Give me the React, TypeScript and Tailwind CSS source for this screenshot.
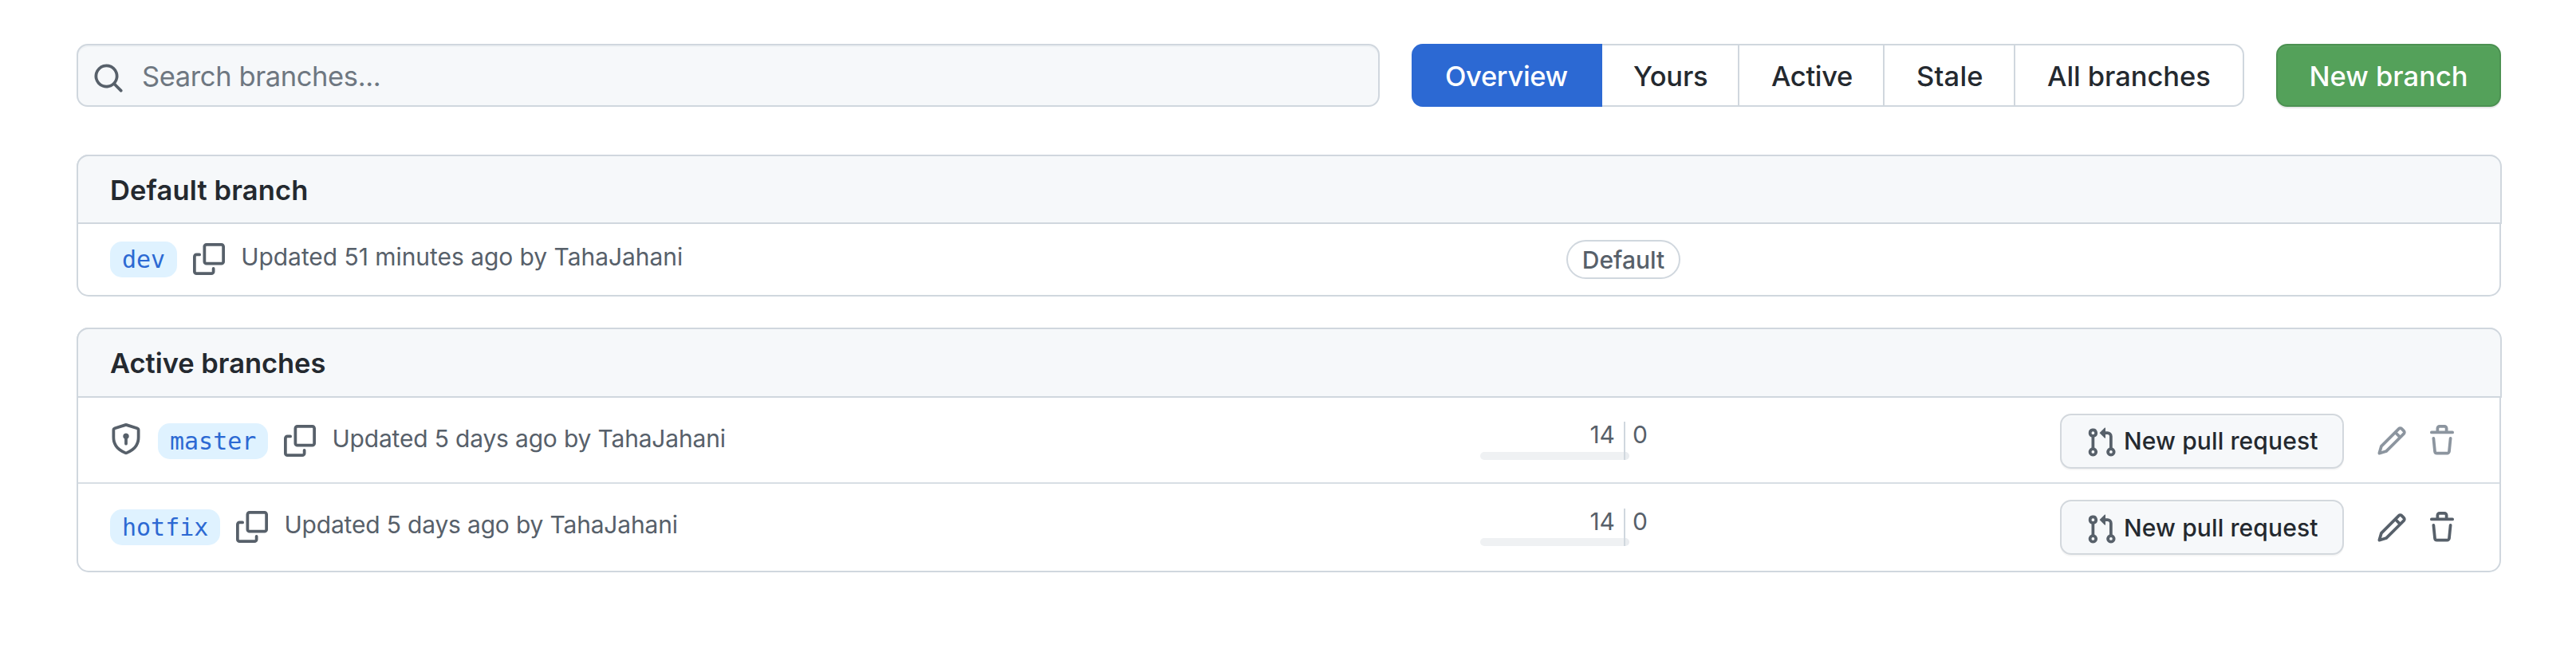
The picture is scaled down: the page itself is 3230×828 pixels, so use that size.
import React from "react";

const paths = {
  search:
    "M11.5 7a4.499 4.499 0 11-8.998 0A4.499 4.499 0 0111.5 7zm-.82 4.74a6 6 0 111.06-1.06l3.04 3.04a.75.75 0 11-1.06 1.06l-3.04-3.04z",
  copy:
    "M0 6.75C0 5.784.784 5 1.75 5h1.5a.75.75 0 010 1.5h-1.5a.25.25 0 00-.25.25v7.5c0 .138.112.25.25.25h7.5a.25.25 0 00.25-.25v-1.5a.75.75 0 011.5 0v1.5A1.75 1.75 0 019.25 16h-7.5A1.75 1.75 0 010 14.25v-7.5zM5 1.75C5 .784 5.784 0 6.75 0h7.5C15.216 0 16 .784 16 1.75v7.5A1.75 1.75 0 0114.25 11h-7.5A1.75 1.75 0 015 9.25v-7.5zm1.75-.25a.25.25 0 00-.25.25v7.5c0 .138.112.25.25.25h7.5a.25.25 0 00.25-.25v-7.5a.25.25 0 00-.25-.25h-7.5z",
  shield:
    "M8.533.133a1.75 1.75 0 00-1.066 0l-5.25 1.68A1.75 1.75 0 001 3.48V7c0 1.566.32 3.182 1.303 4.682.983 1.498 2.585 2.813 5.032 3.855a1.7 1.7 0 001.33 0c2.447-1.042 4.049-2.357 5.032-3.855C14.68 10.182 15 8.566 15 7V3.48a1.75 1.75 0 00-1.217-1.667L8.533.133zm-.61 1.429a.25.25 0 01.153 0l5.25 1.68a.25.25 0 01.174.238V7c0 1.358-.275 2.666-1.057 3.86-.784 1.194-2.121 2.34-4.366 3.297a.2.2 0 01-.154 0c-2.245-.956-3.582-2.104-4.366-3.298C2.775 9.666 2.5 8.36 2.5 7V3.48a.25.25 0 01.174-.237l5.25-1.68zM9.5 6.5a1.5 1.5 0 01-.75 1.3v2.45a.75.75 0 01-1.5 0V7.8A1.5 1.5 0 119.5 6.5z",
  pullRequest:
    "M7.177 3.073L9.573.677A.25.25 0 0110 .854v4.792a.25.25 0 01-.427.177L7.177 3.427a.25.25 0 010-.354zM3.75 2.5a.75.75 0 100 1.5.75.75 0 000-1.5zm-2.25.75a2.25 2.25 0 113 2.122v5.256a2.251 2.251 0 11-1.5 0V5.372A2.25 2.25 0 011.5 3.25zM11 2.5h-1V4h1a1 1 0 011 1v5.628a2.251 2.251 0 101.5 0V5A2.5 2.5 0 0011 2.5zm1 10.25a.75.75 0 111.5 0 .75.75 0 01-1.5 0zM3.75 12a.75.75 0 100 1.5.75.75 0 000-1.5z",
  pencil:
    "M11.013 1.427a1.75 1.75 0 012.474 0l1.086 1.086a1.75 1.75 0 010 2.474l-8.61 8.61c-.21.21-.47.364-.756.445l-3.251.93a.75.75 0 01-.927-.928l.929-3.25a1.75 1.75 0 01.445-.758l8.61-8.61zm1.414 1.06a.25.25 0 00-.354 0L10.811 3.75l1.439 1.44 1.263-1.263a.25.25 0 000-.354l-1.086-1.086zM11.189 6.25L9.75 4.81l-6.286 6.287a.25.25 0 00-.064.108l-.558 1.953 1.953-.558a.249.249 0 00.108-.064l6.286-6.286z",
  trash:
    "M6.5 1.75a.25.25 0 01.25-.25h2.5a.25.25 0 01.25.25V3h-3V1.75zm4.5 0V3h2.25a.75.75 0 010 1.5H2.75a.75.75 0 010-1.5H5V1.75C5 .784 5.784 0 6.75 0h2.5C10.216 0 11 .784 11 1.75zM4.496 6.675a.75.75 0 10-1.492.15l.66 6.6A1.75 1.75 0 005.405 15h5.19c.9 0 1.652-.681 1.741-1.576l.66-6.6a.75.75 0 00-1.492-.149l-.66 6.6a.25.25 0 01-.249.225h-5.19a.25.25 0 01-.249-.225l-.66-6.6z",
};

function Icon({ name, className = "" }: { name: keyof typeof paths; className?: string }) {
  return (
    <svg viewBox="0 0 16 16" fill="currentColor" fillRule="evenodd" className={`size-10 shrink-0 ${className}`}>
      <path d={paths[name]} />
    </svg>
  );
}

const tabs = [
  { label: "Overview", style: "w-[239px] rounded-l-[14px] bg-[#2c69d3] pl-[42px] text-white tracking-[-0.34px]" },
  { label: "Yours", style: "w-[172px] border-y-2 border-r-2 border-[#d0d7de] pl-[39px] tracking-[-0.24px]" },
  { label: "Active", style: "w-[182px] border-y-2 border-r-2 border-[#d0d7de] pl-10 tracking-[-0.34px]" },
  { label: "Stale", style: "w-[164px] border-y-2 border-r-2 border-[#d0d7de] pl-10 tracking-[0.2px]" },
  { label: "All branches", style: "w-[287px] rounded-r-[14px] border-y-2 border-r-2 border-[#d0d7de] pl-10 tracking-[-0.05px]" },
];

function Toolbar() {
  return (
    <div className="flex h-[79px] text-[34.5px] font-medium">
      <div className="flex w-[1634px] items-center rounded-[14px] border-2 border-[#d0d7de] bg-[#f6f8fa] pl-[18px] shadow-[inset_0_2px_0_rgba(208,215,222,0.2)]">
        <Icon name="search" className="mt-[7px] text-[#57606a]" />
        <span className="ml-[22px] pt-[2px] font-normal tracking-[-0.39px] text-[#6e7781]">Search branches...</span>
      </div>
      <div className="ml-10 flex">
        {tabs.map((tab) => (
          <button key={tab.label} className={`flex items-center pt-[2px] whitespace-nowrap ${tab.style}`}>
            {tab.label}
          </button>
        ))}
      </div>
      <button className="ml-10 w-[282px] rounded-[14px] border-2 border-[#4c9152] bg-[#54a15a] pt-[2px] whitespace-nowrap text-white shadow-[0_2px_0_rgba(27,31,36,0.1),inset_0_2px_0_rgba(255,255,255,0.03)]">
        New branch
      </button>
    </div>
  );
}

function BoxHeader({ title, className }: { title: string; className: string }) {
  return (
    <div
      className={`-mt-[2px] -mr-[3px] -ml-[2px] flex items-center rounded-t-[15px] border-2 border-[#d0d7de] bg-[#f6f8fa] pt-[2px] pl-10 text-[34.5px] font-semibold ${className}`}
    >
      {title}
    </div>
  );
}

function BranchInfo({ name, updated, locked, className }: { name: string; updated: string; locked?: boolean; className: string }) {
  return (
    <div className="flex w-[1758px] shrink-0 items-start pl-10 text-[#57606a]">
      {locked && <Icon name="shield" className="mr-[20px]" />}
      <span className="h-[45px] rounded-[15px] bg-[#dff2ff] px-[15px] font-['DejaVu_Sans_Mono',monospace] text-[30px] leading-[45px] text-[#2c69d3]">
        {name}
      </span>
      <Icon name="copy" className="mt-[2px] ml-5" />
      <span className={`-mt-px ml-5 text-[30px] leading-10 whitespace-nowrap ${className}`}>{updated}</span>
    </div>
  );
}

function Divergence({ behind, ahead, className }: { behind: number; ahead: number; className: string }) {
  return (
    <div className={`flex text-[30px] leading-[38px] text-[#57606a] ${className}`}>
      <div className="flex w-[180px] flex-col justify-between">
        <span className="-mt-[3px] pr-[11px] text-right">{behind}</span>
        <div className="h-[10px] rounded-l-[5px] bg-[#eff1f3]" />
      </div>
      <div className="w-[2px] bg-[#d0d7de]" />
      <div className="flex flex-col justify-between">
        <span className="-mt-[3px] pl-[9px]">{ahead}</span>
        <div className="h-[10px] w-[5px] rounded-r-[5px] bg-[#e9ecef]" />
      </div>
    </div>
  );
}

function Actions({ muted, className = "" }: { muted?: boolean; className?: string }) {
  const tone = muted ? "text-[#8c959f]" : "text-[#57606a]";
  return (
    <div className="-mt-3 ml-auto flex items-start pr-[52px]">
      <button
        className={`flex h-[69px] w-[356px] items-center rounded-[14px] border-2 border-[#d3d8dd] bg-[#f6f8fa] pl-[30px] text-[30px] font-medium whitespace-nowrap shadow-[0_2px_0_rgba(27,31,36,0.04),inset_0_2px_0_rgba(255,255,255,0.25)] ${className}`}
      >
        <Icon name="pullRequest" className="mt-[3px] text-[#57606a]" />
        <span className="ml-[8px] tracking-[0.12px]">New pull request</span>
      </button>
      <Icon name="pencil" className={muted ? `mt-[14px] ml-10 ${tone}` : `mt-[15px] ml-10 ${tone}`} />
      <Icon name="trash" className={muted ? `mt-[14px] ml-[23px] ${tone}` : `mt-[15px] ml-[23px] ${tone}`} />
    </div>
  );
}

export default function App() {
  return (
    <div className="h-[828px] w-[3230px] bg-white pt-[55px] pl-24 font-['Inter','Liberation_Sans',sans-serif] text-[#24292f]">
      <div className="w-[3040px]">
        <Toolbar />
        <section className="mt-[60px] rounded-[15px] border-2 border-[#d0d7de]">
          <BoxHeader title="Default branch" className="h-[87px] tracking-[0.14px]" />
          <div className="flex h-[89px] items-start pt-[22px]">
            <BranchInfo name="dev" updated="Updated 51 minutes ago by TahaJahani" className="tracking-[-0.05px]" />
            <span className="-mt-[2px] ml-[108px] flex h-[49px] w-[143px] items-center justify-center rounded-full border-2 border-[#d0d7de] pt-[2px] text-[30px] font-medium text-[#57606a]">
              Default
            </span>
          </div>
        </section>
        <section className="mt-[39px] rounded-[15px] border-2 border-[#d0d7de]">
          <BoxHeader title="Active branches" className="h-[88px] tracking-[-0.04px]" />
          <div className="flex h-[108px] items-start border-b-2 border-[#d8dee4] pt-8">
            <BranchInfo name="master" updated="Updated 5 days ago by TahaJahani" locked className="tracking-[-0.18px]" />
            <Divergence behind={14} ahead={0} className="-mt-[2px] h-12" />
            <Actions muted />
          </div>
          <div className="flex h-[109px] items-start pt-8">
            <BranchInfo name="hotfix" updated="Updated 5 days ago by TahaJahani" className="tracking-[-0.18px]" />
            <Divergence behind={14} ahead={0} className="-mt-px h-[47px]" />
            <Actions className="pt-[2px]" />
          </div>
        </section>
      </div>
    </div>
  );
}
